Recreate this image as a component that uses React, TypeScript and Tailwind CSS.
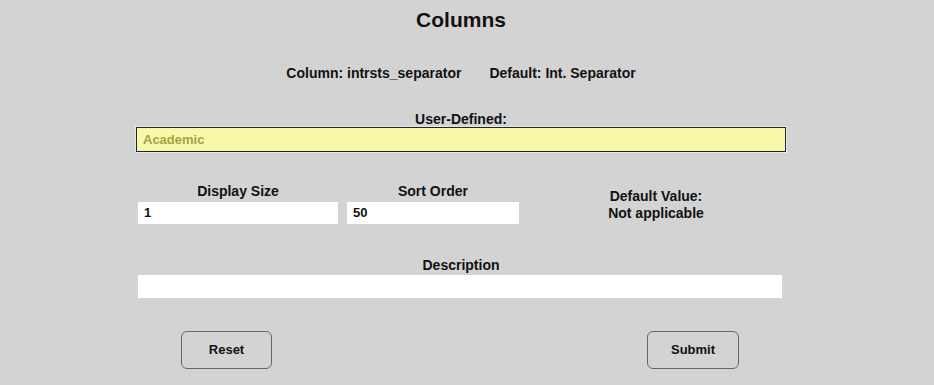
import React from 'react';

export default function ColumnsPage() {
  const label = "font-['Liberation_Sans',Arial,sans-serif] font-bold text-[14px] text-[#111] leading-[16px]";

  return (
    <div className="w-[934px] h-[385px] bg-[#d3d3d3] overflow-hidden font-['Liberation_Sans',Arial,sans-serif]">
      <div className="ml-[136px] w-[650px] flex flex-col">
        {/* Title */}
        <h1 className="mt-[8px] text-center text-[21px] leading-[24px] font-bold text-[#111]">Columns</h1>

        {/* Column info */}
        <div className={`mt-[33px] flex justify-center gap-[28px] ${label}`}>
          <span>Column: intrsts_separator</span>
          <span>Default: Int. Separator</span>
        </div>

        {/* User defined */}
        <div className={`mt-[30px] text-center ${label}`}>User-Defined:</div>
        <div className="h-[25px] border border-[#1e2433] bg-[#f8f8a8] outline outline-1 outline-[#e8e8e8] flex items-center px-[6px]">
          <span className="text-[13px] font-bold text-[#a3a346]">Academic</span>
        </div>

        {/* Display / sort / default */}
        <div className="mt-[31px] flex items-start">
          <div className="ml-[2px] w-[200px] flex flex-col">
            <div className={`text-center ${label}`}>Display Size</div>
            <div className="mt-[3px] h-[22px] bg-white flex items-center px-[6px] text-[13px] font-bold text-[#111]">1</div>
          </div>
          <div className="ml-[9px] w-[172px] flex flex-col">
            <div className={`text-center ${label}`}>Sort Order</div>
            <div className="mt-[3px] h-[22px] bg-white flex items-center px-[6px] text-[13px] font-bold text-[#111]">50</div>
          </div>
          <div className="ml-[57px] w-[160px] flex flex-col items-center mt-[5px]">
            <div className={label}>Default Value:</div>
            <div className={`mt-[1px] ${label}`}>Not applicable</div>
          </div>
        </div>

        {/* Description */}
        <div className={`mt-[33px] text-center ${label}`}>Description</div>
        <div className="mt-[2px] ml-[2px] w-[644px] h-[23px] bg-white"></div>
      </div>

      {/* Buttons */}
      <div className="mt-[33px] flex">
        <button className="ml-[181px] w-[91px] h-[38px] rounded-[6px] border border-[#666] bg-[#d3d3d3] text-[13px] font-bold text-[#111]">Reset</button>
        <button className="ml-[375px] w-[92px] h-[38px] rounded-[6px] border border-[#666] bg-[#d3d3d3] text-[13px] font-bold text-[#111]">Submit</button>
      </div>
    </div>
  );
}
